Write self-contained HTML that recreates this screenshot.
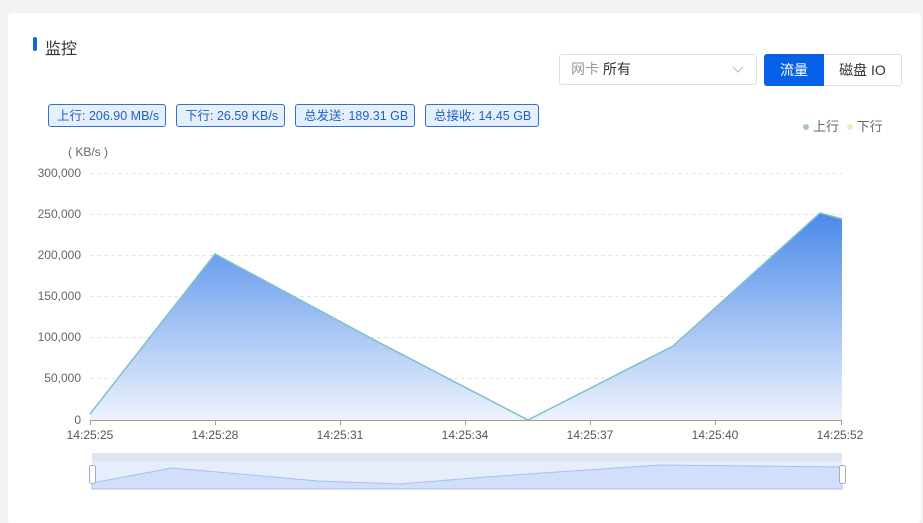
<!DOCTYPE html>
<html><head><meta charset="utf-8"><style>
body{margin:0;width:923px;height:516px;background:#f3f3f3;font-family:"Liberation Sans","Noto Sans CJK SC",sans-serif;overflow:hidden;position:relative}
.card{position:absolute;left:8px;top:13px;width:913px;height:510px;background:#fff;border-radius:4px}
.abs{position:absolute}
.tag{position:absolute;top:104px;height:23px;line-height:22px;border:1px solid #2f6fd6;background:#e6effc;color:#1f5fc9;font-size:12.5px;border-radius:3px;padding:0 8px;box-sizing:border-box;white-space:nowrap}
</style></head><body>
<div class="card"></div>
<div class="abs" style="left:33px;top:37px;width:4px;height:14px;background:#1565e0;border-radius:2px"></div>
<div class="abs" style="left:45px;top:35px;font-size:16px;color:#333">监控</div>
<div class="abs" style="left:559px;top:54px;width:198px;height:31px;border:1px solid #dcdfe6;border-radius:3px;box-sizing:border-box;font-size:14px;line-height:29px;padding-left:11px;color:#333"><span style="color:#999">网卡</span> 所有
<svg class="abs" style="right:12px;top:11px" width="12" height="7"><path d="M1 1L6 6L11 1" fill="none" stroke="#bbb" stroke-width="1"/></svg></div>
<div class="abs" style="left:764px;top:54px;width:60px;height:32px;background:#0760e8;color:#fff;font-size:14px;line-height:32px;text-align:center;border-radius:3px 0 0 3px">流量</div>
<div class="abs" style="left:824px;top:54px;width:78px;height:32px;border:1px solid #dcdfe6;border-left:none;box-sizing:border-box;color:#333;font-size:14px;line-height:30px;text-align:center;border-radius:0 3px 3px 0">磁盘 IO</div>
<div class="tag" style="left:48px;width:118px">上行: 206.90 MB/s</div>
<div class="tag" style="left:176px;width:109px">下行: 26.59 KB/s</div>
<div class="tag" style="left:295px;width:120px">总发送: 189.31 GB</div>
<div class="tag" style="left:425px;width:114px">总接收: 14.45 GB</div>
<div class="abs" style="left:803px;top:116px;font-size:13px;color:#666"><span style="display:inline-block;width:6px;height:6px;border-radius:3px;background:#a9c8bd;margin-right:4px;vertical-align:1px"></span>上行 <span style="display:inline-block;width:6px;height:6px;border-radius:3px;background:#f5e6bd;margin:0 4px 0 4px;vertical-align:1px"></span>下行</div>
<div class="abs" style="left:68px;top:145px;font-size:12px;color:#666">( KB/s )</div>
<svg class="abs" style="left:0;top:0" width="923" height="516">
<defs><linearGradient id="g" x1="0" y1="0" x2="0" y2="1"><stop offset="0" stop-color="#4a89ea"/><stop offset="1" stop-color="#eef3fd"/></linearGradient></defs>
<g font-size="12" fill="#666" text-anchor="end" font-family="Liberation Sans">
<text x="81" y="177">300,000</text><text x="81" y="218">250,000</text><text x="81" y="259">200,000</text><text x="81" y="300">150,000</text><text x="81" y="341">100,000</text><text x="81" y="382">50,000</text><text x="81" y="424">0</text></g>
<g stroke="#e4e4e4" stroke-dasharray="4 3"><line x1="90" x2="842" y1="173.5" y2="173.5"/><line x1="90" x2="842" y1="214.5" y2="214.5"/><line x1="90" x2="842" y1="255.5" y2="255.5"/><line x1="90" x2="842" y1="296.5" y2="296.5"/><line x1="90" x2="842" y1="337.5" y2="337.5"/><line x1="90" x2="842" y1="378.5" y2="378.5"/></g>
<path d="M90 420L90 414L215 254L380 343L528 420L673 346L820 213L842 219L842 420Z" fill="url(#g)"/>
<path d="M90 414L215 254L380 343L528 420L673 346L820 213L842 219" fill="none" stroke="#7fc1c9" stroke-width="1.5"/>
<line x1="90" x2="842" y1="420.5" y2="420.5" stroke="#a89a85"/>
<g stroke="#a89a85"><line x1="90.5" x2="90.5" y1="420" y2="425"/><line x1="215.5" x2="215.5" y1="420" y2="425"/><line x1="340.5" x2="340.5" y1="420" y2="425"/><line x1="465.5" x2="465.5" y1="420" y2="425"/><line x1="590.5" x2="590.5" y1="420" y2="425"/><line x1="715.5" x2="715.5" y1="420" y2="425"/><line x1="841.5" x2="841.5" y1="420" y2="425"/></g>
<g font-size="12" fill="#555" text-anchor="middle" font-family="Liberation Sans"><text x="90" y="439">14:25:25</text><text x="215" y="439">14:25:28</text><text x="340" y="439">14:25:31</text><text x="465" y="439">14:25:34</text><text x="590" y="439">14:25:37</text><text x="715" y="439">14:25:40</text><text x="840" y="439">14:25:52</text></g>
<rect x="92" y="453" width="750" height="8" fill="#dde4f2"/>
<rect x="92" y="461" width="750" height="28" fill="#e6eefc"/>
<path d="M92 483L172 468L318 481L400 484L485 477L660 465L842 467L842 489L92 489Z" fill="#d2dffa" stroke="#a9c0ee" stroke-width="1"/>
<rect x="89.5" y="465.5" width="6" height="18" rx="2" fill="#fff" stroke="#aab"/>
<rect x="839.5" y="465.5" width="6" height="18" rx="2" fill="#fff" stroke="#aab"/>
</svg>
</body></html>
